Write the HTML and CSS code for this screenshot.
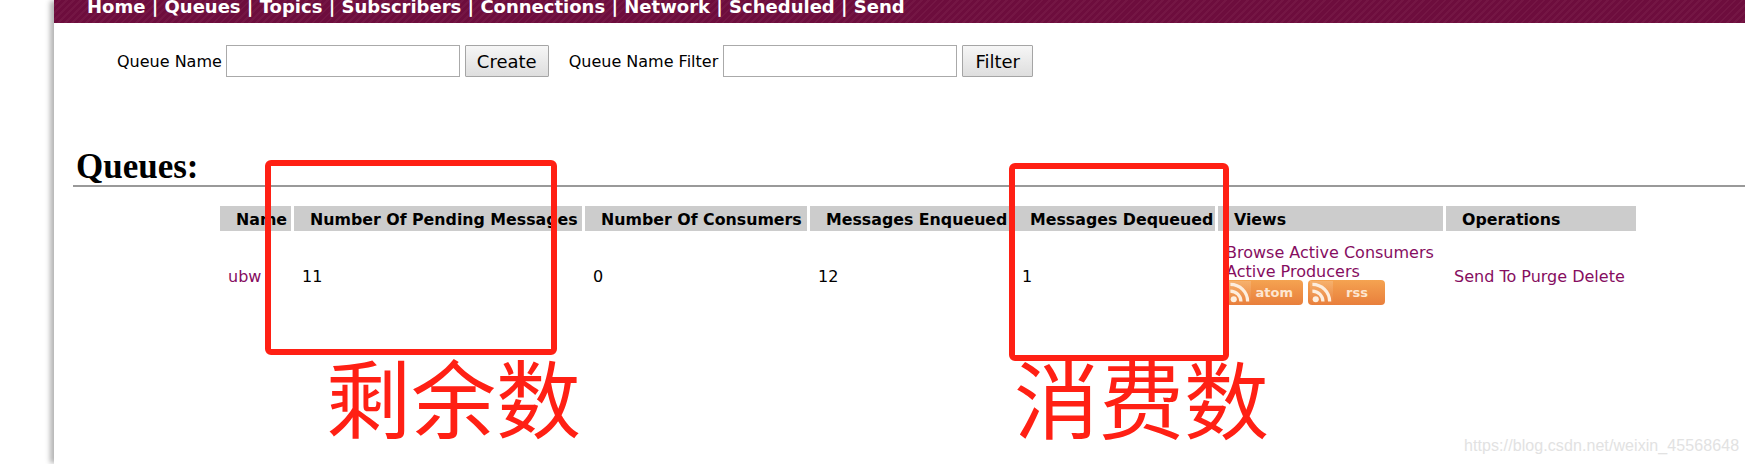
FILE: index.html
```html
<!DOCTYPE html>
<html lang="en">
<head>
    <meta charset="UTF-8">
    <title>Queues</title>
    <link rel="stylesheet" href="styles.css">
</head>
<body>
<div class="page">
    <div class="menu">
        <a href="#">Home</a> | <a href="#">Queues</a> | <a href="#">Topics</a> | <a href="#">Subscribers</a> | <a href="#">Connections</a> | <a href="#">Network</a> | <a href="#">Scheduled</a> | <a href="#">Send</a>
    </div>
    <div class="forms">
        <form class="queue-form">
            <label for="queueName">Queue Name</label>
            <input type="text" id="queueName">
            <button type="button">Create</button>
        </form>
        <form class="queue-form">
            <label for="queueFilter">Queue Name Filter</label>
            <input type="text" id="queueFilter">
            <button type="button">Filter</button>
        </form>
    </div>
    <h2>Queues:</h2>
    <table class="queues">
        <colgroup>
            <col class="c-name"><col class="c-pending"><col class="c-consumers"><col class="c-enqueued"><col class="c-dequeued"><col class="c-views"><col class="c-ops">
        </colgroup>
        <thead>
        <tr>
            <th>Name</th>
            <th>Number Of Pending Messages</th>
            <th>Number Of Consumers</th>
            <th>Messages Enqueued</th>
            <th>Messages Dequeued</th>
            <th>Views</th>
            <th>Operations</th>
        </tr>
        </thead>
        <tbody>
        <tr>
            <td><a href="#">ubw</a></td>
            <td>11</td>
            <td>0</td>
            <td>12</td>
            <td>1</td>
            <td class="views">
                <a href="#">Browse Active Consumers</a><br>
                <a href="#">Active Producers</a><br>
                <div class="feeds">
                    <a href="#" class="feed">
                        <svg viewBox="0 0 24 24" class="feed-icon"><circle cx="6" cy="19" r="3.2"/><path d="M2.5 10.5a11 11 0 0 1 11 11M2.5 3.5a18 18 0 0 1 18 18"/></svg>
                        <span>atom</span>
                    </a>
                    <a href="#" class="feed">
                        <svg viewBox="0 0 24 24" class="feed-icon"><circle cx="6" cy="19" r="3.2"/><path d="M2.5 10.5a11 11 0 0 1 11 11M2.5 3.5a18 18 0 0 1 18 18"/></svg>
                        <span class="feed-rss">rss</span>
                    </a>
                </div>
            </td>
            <td><a href="#">Send To Purge Delete</a></td>
        </tr>
        </tbody>
    </table>
</div>

<div class="mark mark-left"></div>
<div class="mark mark-right"></div>
<div class="note note-left">剩余数</div>
<div class="note note-right">消费数</div>
<div class="watermark">https://blog.csdn.net/weixin_45568648</div>
</body>
</html>
```

FILE: styles.css
```css
html, body {
    margin: 0;
    height: 464px;
    overflow: hidden;
    background: #fff;
}
body {
    font-family: "DejaVu Sans", Verdana, sans-serif;
    font-size: 16px;
    color: #000;
    padding-left: 54px;
}
a {
    color: #860d5f;
    text-decoration: none;
}
.page {
    height: 464px;
    background: #fff;
    box-shadow: -5px 0 5px -1px #b5b5b5;
}
.menu {
    height: 23px;
    box-sizing: border-box;
    padding-left: 33px;
    line-height: 13px;
    font-size: 18px;
    font-weight: bold;
    color: #fff;
    white-space: nowrap;
    background: repeating-linear-gradient(135deg, #6d0d3d 0, #6d0d3d 3px, #741644 3px, #741644 5px);
}
.menu a {
    color: #fff;
}
.forms {
    display: flex;
    padding: 22px 0 0 63px;
    gap: 20px;
}
.queue-form {
    display: flex;
    align-items: center;
    gap: 5px;
}
.queue-form label {
    padding-top: 1px;
}
.queue-form:first-child label {
    margin-right: -1px;
}
.queue-form input {
    width: 234px;
    height: 32px;
    box-sizing: border-box;
    border: 1px solid #aaa;
    background: #fff;
    padding: 0 4px;
}
.queue-form button {
    height: 32px;
    min-width: 71px;
    padding: 0 11px;
    font-family: inherit;
    font-size: 18px;
    color: #000;
    border: 1px solid #a5a5a5;
    border-radius: 1px;
    background: linear-gradient(#f6f6f6, #dedede);
}
h2 {
    margin: 66px 0 0 19px;
    padding: 6px 0 0 3px;
    height: 44px;
    box-sizing: border-box;
    font-family: "Liberation Serif", "Times New Roman", serif;
    font-size: 35px;
    line-height: 36px;
    font-weight: bold;
    border-bottom: 2px solid #999;
}
.queues {
    table-layout: fixed;
    width: 1422px;
    margin: 16px 0 0 163px;
    border-collapse: separate;
    border-spacing: 3px;
}
.c-name { width: 71px; }
.c-pending { width: 288px; }
.c-consumers { width: 222px; }
.c-enqueued { width: 201px; }
.c-dequeued { width: 201px; }
.c-views { width: 225px; }
.c-ops { width: 190px; }
.queues th {
    height: 25px;
    box-sizing: border-box;
    padding: 1px 0 0 16px;
    background: #ccc;
    text-align: left;
    font-size: 15.8px;
    white-space: nowrap;
}
.queues td {
    padding: 8px;
    font-size: 16px;
    line-height: 19px;
    white-space: nowrap;
    vertical-align: middle;
}
.queues td.views {
    padding-top: 9px;
}
.feeds {
    display: flex;
    gap: 5px;
    margin: -1px 0 5px;
}
.feed {
    display: flex;
    align-items: center;
    justify-content: space-between;
    width: 77px;
    height: 25px;
    box-sizing: border-box;
    padding: 0 10px 0 2px;
    border-radius: 4px;
    background: linear-gradient(#f5a351, #e87f3c);
    color: #fde6d0;
    font-size: 13px;
    font-weight: bold;
}
.feed-rss {
    margin-right: 7px;
}
.feed-icon {
    width: 23px;
    height: 23px;
    fill: #fdeede;
    stroke: #fdeede;
    stroke-width: 0;
    background: linear-gradient(rgba(255, 255, 255, 0.16), rgba(255, 255, 255, 0));
}
.feed-icon path {
    fill: none;
    stroke-width: 3.4;
}
.mark {
    position: absolute;
    box-sizing: border-box;
    border: 6px solid #ff2014;
    border-radius: 6px;
}
.mark-left {
    left: 265px;
    top: 160px;
    width: 292px;
    height: 195px;
}
.mark-right {
    left: 1009px;
    top: 163px;
    width: 220px;
    height: 198px;
}
.note {
    position: absolute;
    font-family: "Noto Sans CJK SC", sans-serif;
    font-size: 85px;
    line-height: 86px;
    color: #ff2014;
    white-space: nowrap;
}
.note-left {
    left: 326px;
    top: 352px;
}
.note-right {
    left: 1014px;
    top: 353px;
}
.watermark {
    position: absolute;
    left: 1464px;
    top: 437px;
    font-family: "Liberation Sans", Arial, sans-serif;
    font-size: 16px;
    letter-spacing: 0.08px;
    line-height: 18px;
    color: #e2e2e2;
    white-space: nowrap;
}
```
